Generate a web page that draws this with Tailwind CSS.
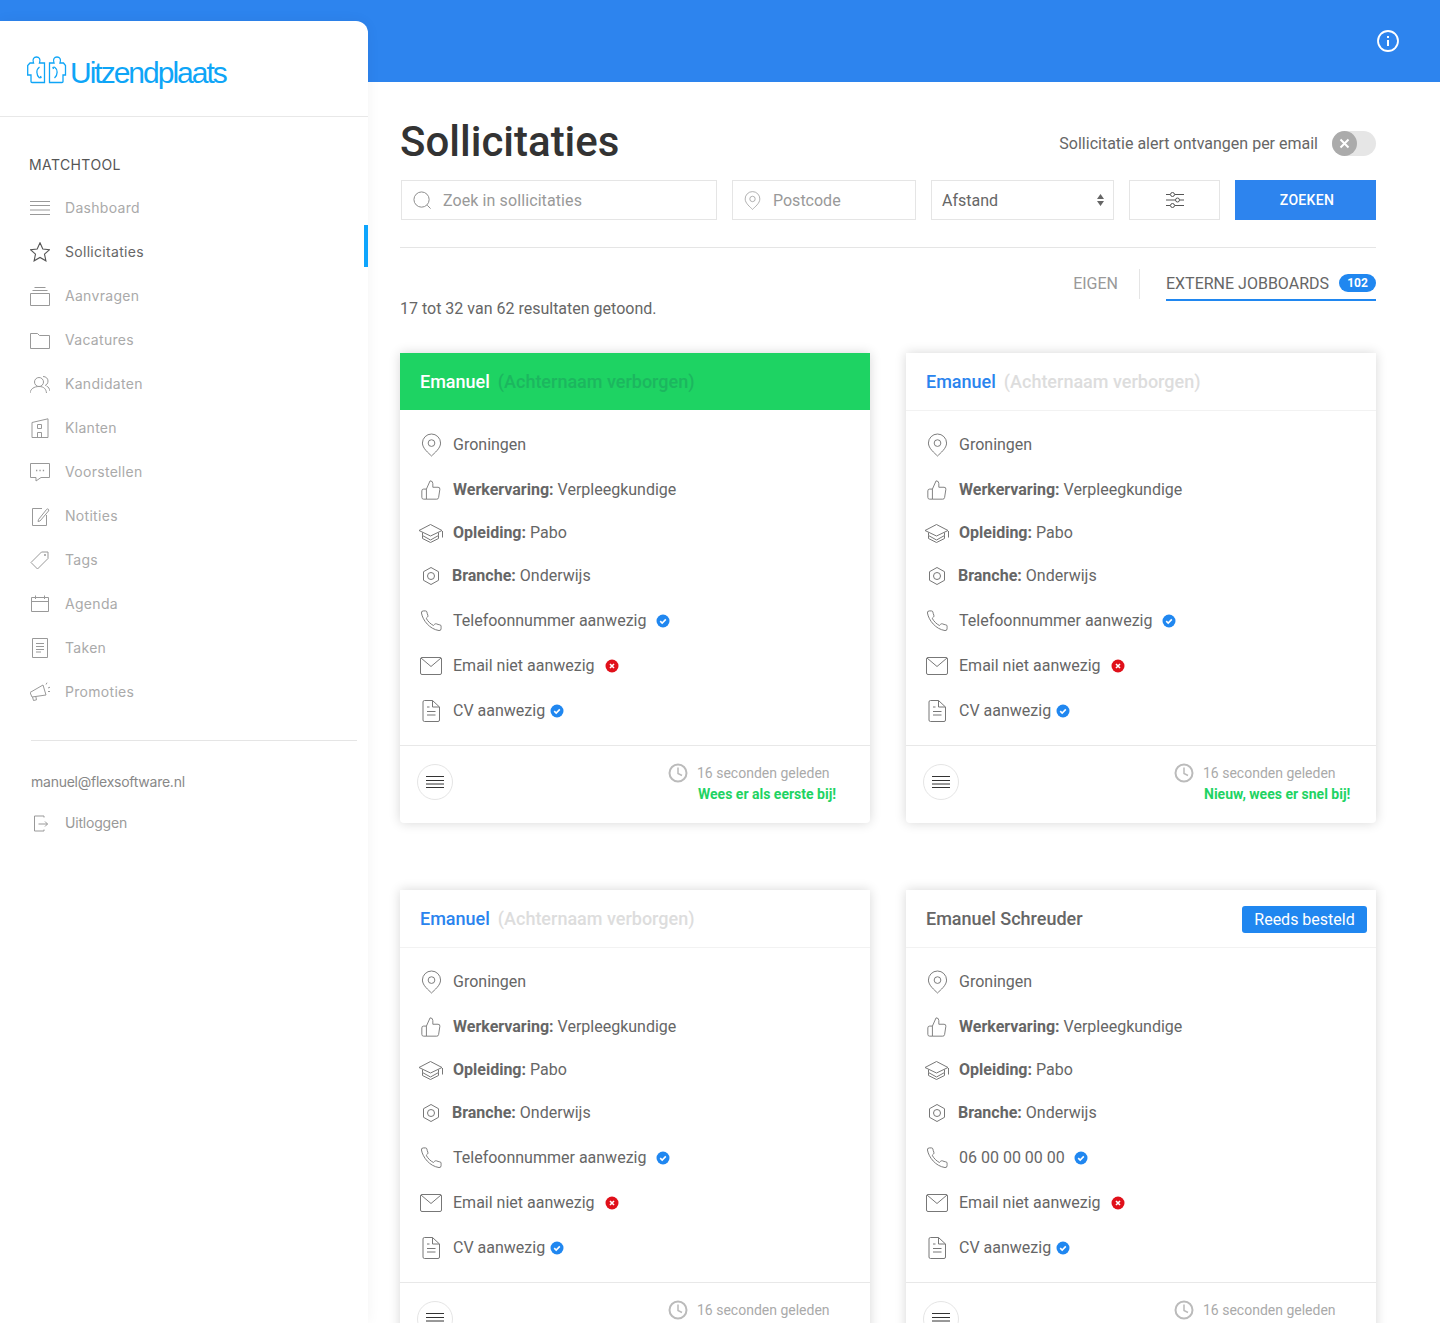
<!DOCTYPE html>
<html lang="nl">
<head>
  <meta charset="UTF-8" />
  <meta name="viewport" content="width=device-width, initial-scale=1.0" />
  <title>Sollicitaties</title>
  <script src="https://cdn.jsdelivr.net/npm/@tailwindcss/browser@4"></script>
</head>
<body class="bg-white h-[1323px] overflow-hidden font-['Roboto',sans-serif] text-[#666]">
  <svg class="hidden">
    <defs>
      <symbol id="i-dashboard" viewBox="0 0 20 20"><path d="M0 3.500h20M0 7.500h20M0 12h20M0 16.500h20" fill="none" stroke="currentColor"/></symbol>
      <symbol id="i-star" viewBox="0 0 20 20"><path d="M10 .8l2.800 6.200 6.700.7-5 4.500 1.400 6.600L10 15.400 4.100 18.800l1.400-6.600-5-4.500 6.700-.7z" fill="none" stroke="currentColor" stroke-width="1.100"/></symbol>
      <symbol id="i-inbox" viewBox="0 0 20 20"><path d="M.5 7.500h19v12H.5zM2.500 4.500h15M4.500 1.500h11" fill="none" stroke="currentColor"/></symbol>
      <symbol id="i-folder" viewBox="0 0 20 20"><path d="M.5 3.500h7l2 2h10v13H.5z" fill="none" stroke="currentColor"/></symbol>
      <symbol id="i-users" viewBox="0 0 20 20"><path d="M9 3.500a4.500 4.500 0 1 1 0 9 4.500 4.500 0 0 1 0-9zM0 19c.5-4 4-6.500 9-6.500s7 2.500 7.500 6.500M13 2.500c3 0 5 2 5 4.500s-1.500 4-3 4.500M16.500 12c2 .7 3 3 3.500 5" fill="none" stroke="currentColor"/></symbol>
      <symbol id="i-building" viewBox="0 0 20 20"><path d="M2 4.500L18 .8v18.700H2zM7.500 6.500h4v4h-4zM7.500 19.500v-5h4v5" fill="none" stroke="currentColor"/></symbol>
      <symbol id="i-chat" viewBox="0 0 20 20"><path d="M.5 1.500h19v14H11l-5 3.500v-3.500H.5z" fill="none" stroke="currentColor"/><path d="M6 8.500h1.300M9.400 8.500h1.300M12.800 8.500h1.300" stroke="currentColor" stroke-width="1.300"/></symbol>
      <symbol id="i-note" viewBox="0 0 20 20"><path d="M12 2.500H2.500v17h14V9M8.500 13.500l-.5 2 2-.5 8.500-10c1-1.300-.7-2.800-1.800-1.700z" fill="none" stroke="currentColor"/></symbol>
      <symbol id="i-tag" viewBox="0 0 20 20"><path d="M1 12.500L11.500 2h6.500v6.500L7.500 19z" fill="none" stroke="currentColor" stroke-linejoin="round"/><circle cx="15" cy="5" r="1" fill="currentColor"/></symbol>
      <symbol id="i-calendar" viewBox="0 0 20 20"><path d="M1.500 3.500h17v14h-17zM1.500 7.500h17M5.500 1.500v3.500M14.500 1.500v3.500" fill="none" stroke="currentColor"/></symbol>
      <symbol id="i-taken" viewBox="0 0 20 20"><path d="M2.500.5h15v19h-15zM6 5.500h8M6 8.500h8M6 11.500h8M6 14h5" fill="none" stroke="currentColor"/></symbol>
      <symbol id="i-megaphone" viewBox="0 0 20 20"><path d="M0 10.500L13 3l3 10-14 2zM2.500 15l1 3.500 3-.7-.7-3.200M16 2.500l1-1.800M18 6l2-.8M18 9.500h2" fill="none" stroke="currentColor"/></symbol>
      <symbol id="i-logout" viewBox="0 0 20 20"><path d="M14 4.500V3H4.500v15H14v-1.500M8.500 11h9M15 8.500l2.500 2.500-2.500 2.500" fill="none" stroke="currentColor"/></symbol>
      <symbol id="i-search" viewBox="0 0 20 20"><circle cx="9" cy="9" r="8" fill="none" stroke="currentColor"/><path d="M15 15l3.500 3.500" stroke="currentColor"/></symbol>
      <symbol id="i-pin" viewBox="0 0 22 24"><path d="M11 23.500C8 20.500 1.500 15.500 1.500 10a9.500 9.500 0 0 1 19 0c0 5.500-6.500 10.500-9.500 13.500z" fill="none" stroke="currentColor" stroke-linejoin="round"/><circle cx="11" cy="10" r="3.500" fill="none" stroke="currentColor"/></symbol>
      <symbol id="i-thumb" viewBox="0 0 24 24"><path d="M14 9V5a3 3 0 0 0-3-3l-4 9v11h11.280a2 2 0 0 0 2-1.700l1.380-9a2 2 0 0 0-2-2.300zM7 22H4a2 2 0 0 1-2-2v-7a2 2 0 0 1 2-2h3" fill="none" stroke="currentColor" stroke-linejoin="round"/></symbol>
      <symbol id="i-edu" viewBox="0 0 26 20"><path d="M1 7.500L12.500 1.500 24 7.500 12.500 13zM4.500 9.500v3l8 4.500 8-4.500v-3M4.500 12.500v3l8 4 8-4v-3M24.500 8v6.500" fill="none" stroke="currentColor" stroke-linejoin="round"/></symbol>
      <symbol id="i-hex" viewBox="0 0 20 20"><path d="M10 1.500l7.500 4.200v8.600L10 18.500l-7.500-4.200V5.700z" fill="none" stroke="currentColor"/><circle cx="10" cy="10" r="3.500" fill="none" stroke="currentColor"/></symbol>
      <symbol id="i-phone" viewBox="0 0 24 24"><path d="M22 19.500v1a2 2 0 0 1-2.180 2C10 21 3 12 1.500 4.200A2 2 0 0 1 3.500 2h2.200a1.500 1.500 0 0 1 1.500 1.200c.2 1 .5 2.300 1 3.300.3.700.1 1.400-.4 1.900L6.500 9.700c1.500 3 4.500 6 7.500 7.500l1.300-1.300c.5-.5 1.300-.6 1.900-.4 1 .5 2.300.8 3.300 1a1.500 1.500 0 0 1 1.500 1.500z" fill="none" stroke="currentColor" stroke-linejoin="round"/></symbol>
      <symbol id="i-mail" viewBox="0 0 22 18"><path d="M2 .5h18a1.500 1.500 0 0 1 1.500 1.500v14a1.500 1.500 0 0 1-1.500 1.500H2A1.500 1.500 0 0 1 .5 16V2A1.500 1.500 0 0 1 2 .5zM1 1l10 8.500L21 1" fill="none" stroke="currentColor"/></symbol>
      <symbol id="i-doc" viewBox="0 0 18 22"><path d="M2.500.5h8l7 6.500v13a1.500 1.500 0 0 1-1.500 1.500H2.500A1.500 1.500 0 0 1 1 20V2A1.500 1.500 0 0 1 2.500.5zM10.500.5V7h7M5 7h2.500M5 11.500h8.500M5 15h8.500" fill="none" stroke="currentColor"/></symbol>
    </defs>
  </svg>

  <header class="h-[82px] bg-[#2d84ee] flex items-start justify-end pt-[30px] pr-[41px]">
    <svg class="w-[22px] h-[22px] text-white" viewBox="0 0 22 22" fill="none" stroke="currentColor" stroke-width="1.800">
      <circle cx="11" cy="11" r="10"/>
      <path d="M11 10v6" stroke-width="2"/>
      <path d="M11 6v2" stroke-width="2"/>
    </svg>
  </header>

  <div class="flex">
    <aside class="relative z-10 w-[368px] h-[1302px] -mt-[61px] shrink-0 bg-white rounded-tr-[12px] shadow-[0_0_14px_rgba(0,0,0,0.05)] font-['Inter',sans-serif]">
      <div class="h-[96px] border-b border-[#e8e8e8] pl-[27px] pt-[35px] flex items-start">
        <svg class="w-[40px] h-[30px] text-[#0ea5f7] shrink-0" viewBox="0 0 40 30" fill="none" stroke="currentColor" stroke-width="1.300">
          <path d="M6.500 7C5 3 7 1 9.500 1S14 3 12.500 7h5v19.500H5a1 1 0 0 1-1-1V19H.7V9.500L3 7z"/>
          <path d="M27 7c-1.500-4 .5-6 3-6s4.500 2 3 6h3.500l2 2.500V19H36v6.500a1 1 0 0 1-1 1H22.500V7z"/>
          <path d="M12.500 11c-3.500 2.500-3.500 8 0 11M12.500 22l1.500-.5-.5-1.500M27.500 11c3.500 2.500 3.500 8 0 11M27.500 11l-1.500.5.500 1.500"/>
        </svg>
        <span class="ml-[4px] -mt-[1px] -translate-x-px text-[30px] leading-[36px] tracking-[-2px] text-[#0ea5f7] font-['Liberation_Sans',sans-serif]">Uitzendplaats</span>
      </div>

      <div class="pl-[29px] pt-[38px] text-[14px] leading-[20px] tracking-[0.4px] text-[#555]">MATCHTOOL</div>

      <nav id="nav" class="mt-[11px]"></nav>

      <div class="ml-[31px] mr-[11px] mt-[26px] border-t border-[#e5e5e5]"></div>
      <div class="pl-[31px] mt-[31px] text-[14px] leading-[20px] tracking-[-0.25px] text-[#888]">manuel@flexsoftware.nl</div>
      <a class="flex items-center pl-[30px] mt-[21px] text-[14px] leading-[20px] tracking-[-0.2px] text-[#999]">
        <svg class="w-[20px] h-[20px] shrink-0"><use href="#i-logout"/></svg>
        <span class="ml-[15px]">Uitloggen</span>
      </a>
    </aside>

    <main class="flex-1 pl-[32px] pr-[64px]">
      <div class="flex items-center justify-between h-[98px] pt-[22px]">
        <h1 class="text-[42px] leading-[76px] font-medium text-[#333]">Sollicitaties</h1>
        <div class="flex items-center pt-[3px]">
          <span class="text-[16px] pt-[1px] text-[#666]">Sollicitatie alert ontvangen per email</span>
          <span class="ml-[14px] w-[44px] h-[25px] rounded-full bg-[#e6e6e6] flex">
            <span class="w-[25px] h-[25px] rounded-full bg-[#ababab] flex items-center justify-center">
              <svg class="w-[11px] h-[11px] text-white" viewBox="0 0 11 11" stroke="currentColor" stroke-width="2"><path d="M1.500 1.500l8 8M9.500 1.500l-8 8"/></svg>
            </span>
          </span>
        </div>
      </div>

      <div class="flex gap-[15px] ml-px h-[40px] text-[16px]">
        <div class="w-[316px] border border-[#e5e5e5] flex items-center pl-[11px] text-[#999]">
          <svg class="w-[19px] h-[19px] text-[#888] shrink-0"><use href="#i-search"/></svg>
          <span class="ml-[11px] pt-[1px] tracking-[0.1px]">Zoek in sollicitaties</span>
        </div>
        <div class="w-[184px] border border-[#e5e5e5] flex items-center pl-[11px] text-[#999]">
          <svg class="w-[17px] h-[19px] text-[#999] shrink-0"><use href="#i-pin"/></svg>
          <span class="ml-[12px] pt-[1px]">Postcode</span>
        </div>
        <div class="w-[183px] border border-[#e5e5e5] flex items-center justify-between pl-[10px] pr-[9px] text-[#666]">
          <span class="pt-[1px]">Afstand</span>
          <svg class="w-[7px] h-[12px] text-[#666]" viewBox="0 0 7 12" fill="currentColor"><path d="M3.500 0L7 5H0zM0 7h7l-3.500 5z"/></svg>
        </div>
        <div class="w-[91px] border border-[#e5e5e5] flex items-center justify-center">
          <svg class="w-[18px] h-[16px] text-[#555]" viewBox="0 0 18 16" fill="none" stroke="currentColor">
            <path d="M0 2.500h4M9 2.500h9M0 8h9M14 8h4M0 13.500h4M9 13.500h9"/>
            <circle cx="6.500" cy="2.500" r="2"/><circle cx="11.500" cy="8" r="2"/><circle cx="6.500" cy="13.500" r="2"/>
          </svg>
        </div>
        <button class="w-[141px] pl-[3px] bg-[#2d84ee] text-white text-[14px] tracking-[0.3px] font-medium">ZOEKEN</button>
      </div>

      <div class="mt-[27px] border-t border-[#e5e5e5]"></div>

      <div class="mt-[21px] flex justify-between items-start h-[49px]">
        <p class="mt-[30px] text-[16px] leading-[20px] text-[#666]">17 tot 32 van 62 resultaten getoond.</p>
        <div class="flex items-start h-[32px]">
          <span class="text-[16px] leading-[30px] text-[#999]">EIGEN</span>
          <span class="mx-[21px] w-px h-[30px] bg-[#e5e5e5]"></span>
          <div class="ml-[5px] h-[32px] border-b-2 border-[#2087f0] flex items-start">
            <span class="text-[16px] leading-[30px] text-[#666]">EXTERNE JOBBOARDS</span>
            <span class="ml-[10px] mt-[5px] w-[37px] h-[18px] rounded-full bg-[#2087f0] text-white text-[12px] leading-[18px] font-bold text-center">102</span>
          </div>
        </div>
      </div>

      <div id="cards" class="mt-[35px] grid grid-cols-2 gap-x-[36px] gap-y-[67px]"></div>
    </main>
  </div>

  <script>
    const navItems = [
      ['i-dashboard', 'Dashboard'], ['i-star', 'Sollicitaties', true], ['i-inbox', 'Aanvragen'],
      ['i-folder', 'Vacatures'], ['i-users', 'Kandidaten'], ['i-building', 'Klanten'],
      ['i-chat', 'Voorstellen'], ['i-note', 'Notities'], ['i-tag', 'Tags'],
      ['i-calendar', 'Agenda'], ['i-taken', 'Taken'], ['i-megaphone', 'Promoties']
    ];

    document.getElementById('nav').innerHTML = navItems.map(([icon, label, active]) => `
      <a class="relative flex items-center h-[44px] pl-[30px] text-[14px] tracking-[0.3px] ${active ? 'text-[#666]' : 'text-[#aaa]'}">
        <svg class="w-[20px] h-[20px] shrink-0 ${active ? 'text-[#555]' : 'text-[#999]'}"><use href="#${icon}"/></svg>
        <span class="ml-[15px] pb-[1px]">${label}</span>
        ${active ? '<span class="absolute right-0 -top-[5px] w-[4px] h-[42px] bg-[#0ea5fd]"></span>' : ''}
      </a>`).join('');

    const ok = `<svg class="w-[14px] h-[14px] shrink-0" viewBox="0 0 14 14"><circle cx="7" cy="7" r="6.500" fill="#2087f0"/><path d="M4.200 7.200l2 1.900 3.600-3.700" fill="none" stroke="#fff" stroke-width="1.600"/></svg>`;
    const no = `<svg class="w-[14px] h-[14px] shrink-0" viewBox="0 0 14 14"><circle cx="7" cy="7" r="6.500" fill="#e0101a"/><path d="M5 5l4 4M9 5l-4 4" fill="none" stroke="#fff" stroke-width="1.600"/></svg>`;

    function row(icon, cls, h, content, textMl = 'ml-[11px]') {
      return `<div class="flex items-center ${h}">
        <span class="w-[22px] flex justify-center shrink-0 text-[#777]"><svg class="${cls} shrink-0"><use href="#${icon}"/></svg></span>
        <span class="${textMl} flex items-center text-[16px] leading-[20px] text-[#666]">${content}</span>
      </div>`;
    }

    const cards = [
      { head: 'green', note: 'Wees er als eerste bij!', phone: 'Telefoonnummer aanwezig' },
      { head: 'blue', note: 'Nieuw, wees er snel bij!', phone: 'Telefoonnummer aanwezig' },
      { head: 'blue', note: 'Wees er als eerste bij!', phone: 'Telefoonnummer aanwezig' },
      { head: 'named', note: 'Wees er als eerste bij!', phone: '06 00 00 00 00' }
    ];

    function cardHead(type) {
      if (type === 'green') {
        return `<div class="h-[58px] bg-[#1ed363] border-b border-white flex items-center pl-[20px] text-[18px] font-medium">
          <span class="text-white">Emanuel</span><span class="ml-[8px] text-[#1cb65f]">(Achternaam verborgen)</span></div>`;
      }
      if (type === 'blue') {
        return `<div class="h-[58px] border-b border-[#f2f2f2] flex items-center pl-[20px] text-[18px] font-medium">
          <span class="text-[#2a84ee]">Emanuel</span><span class="ml-[8px] text-[#dddddd]">(Achternaam verborgen)</span></div>`;
      }
      return `<div class="h-[58px] border-b border-[#f2f2f2] flex items-center justify-between pl-[20px] pr-[9px] text-[18px] font-medium">
        <span class="text-[#666]">Emanuel Schreuder</span>
        <span class="h-[27px] mt-[1px] w-[125px] rounded-[3px] bg-[#2087f0] text-white text-[16px] font-normal leading-[27px] text-center">Reeds besteld</span></div>`;
    }

    document.getElementById('cards').innerHTML = cards.map(c => `
      <article class="h-[470px] bg-white rounded-b-[4px] shadow-[0_0_12px_rgba(0,0,0,0.16)]">
        ${cardHead(c.head)}
        <div class="h-[335px] pl-[20px] pt-[12px] border-b border-[#e8e8e8]">
          ${row('i-pin', 'w-[21px] h-[24px]', 'h-[44px]', 'Groningen')}
          ${row('i-thumb', 'w-[22px] h-[22px]', 'h-[45px]', '<b class="font-bold mr-[4px]">Werkervaring:</b> Verpleegkundige')}
          ${row('i-edu', 'w-[26px] h-[20px]', 'h-[42px]', '<b class="font-bold mr-[4px]">Opleiding:</b> Pabo')}
          ${row('i-hex', 'w-[20px] h-[20px]', 'h-[44px]', '<b class="font-bold mr-[4px]">Branche:</b> Onderwijs', 'ml-[10px]')}
          ${row('i-phone', 'w-[23px] h-[23px]', 'h-[45px]', `${c.phone}<span class="${c.phone.startsWith('06') ? 'ml-[9px]' : 'ml-[10px]'}">${ok}</span>`)}
          ${row('i-mail', 'w-[22px] h-[18px]', 'h-[45px]', `Email niet aanwezig<span class="ml-[10px]">${no}</span>`)}
          ${row('i-doc', 'w-[18px] h-[22px]', 'h-[45px]', `CV aanwezig<span class="ml-[5px]">${ok}</span>`)}
        </div>
        <div class="h-[77px] flex items-start pl-[17px] pt-[18px]">
          <span class="w-[36px] h-[36px] rounded-full border border-[#e5e5e5] flex items-center justify-center shrink-0">
            <svg class="w-[18px] h-[14px] text-[#333]" viewBox="0 0 18 14" stroke="currentColor"><path d="M0 1.500h18M0 5.500h18M0 9h18M0 12.500h18"/></svg>
          </span>
          <div class="ml-[215px] -mt-[2px]">
            <div class="flex items-center h-[22px]">
              <svg class="w-[20px] h-[20px] text-[#bbb]" viewBox="0 0 20 20" fill="none" stroke="currentColor" stroke-width="2"><circle cx="10" cy="10" r="8.500"/><path d="M10 4.500V10.500l4 2" stroke-width="1.500"/></svg>
              <span class="ml-[9px] text-[14px] text-[#aaa]">16 seconden geleden</span>
            </div>
            <div class="ml-[30px] text-[14px] leading-[20px] font-bold text-[#1ed363]">${c.note}</div>
          </div>
        </div>
      </article>`).join('');
  </script>
</body>
</html>
